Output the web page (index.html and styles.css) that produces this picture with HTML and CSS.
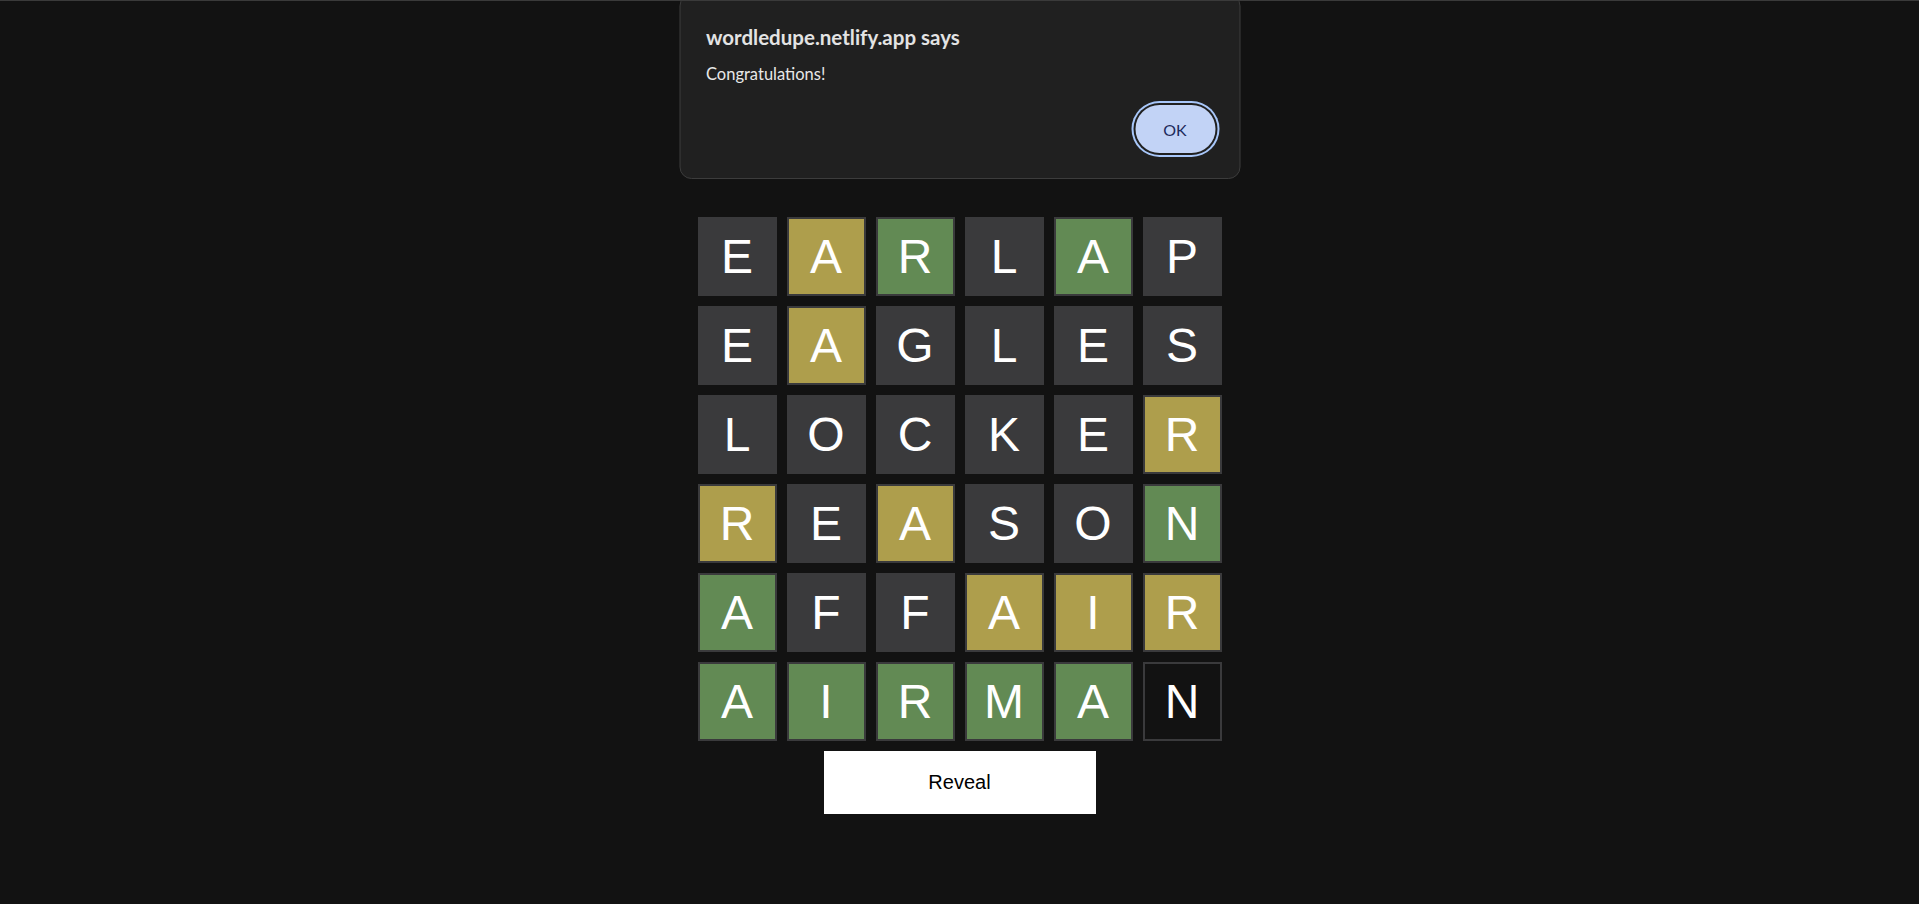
FILE: index.html
```html
<!DOCTYPE html>
<html lang="en">
<head>
<meta charset="utf-8">
<title>Wordle Dupe</title>
<link rel="stylesheet" href="styles.css">
</head>
<body>
<main class="game">
  <div class="board">
    <div class="tile absent">E</div><div class="tile present">A</div><div class="tile correct">R</div><div class="tile absent">L</div><div class="tile correct">A</div><div class="tile absent">P</div>
    <div class="tile absent">E</div><div class="tile present">A</div><div class="tile absent">G</div><div class="tile absent">L</div><div class="tile absent">E</div><div class="tile absent">S</div>
    <div class="tile absent">L</div><div class="tile absent">O</div><div class="tile absent">C</div><div class="tile absent">K</div><div class="tile absent">E</div><div class="tile present">R</div>
    <div class="tile present">R</div><div class="tile absent">E</div><div class="tile present">A</div><div class="tile absent">S</div><div class="tile absent">O</div><div class="tile correct">N</div>
    <div class="tile correct">A</div><div class="tile absent">F</div><div class="tile absent">F</div><div class="tile present">A</div><div class="tile present">I</div><div class="tile present">R</div>
    <div class="tile correct">A</div><div class="tile correct">I</div><div class="tile correct">R</div><div class="tile correct">M</div><div class="tile correct">A</div><div class="tile empty">N</div>
  </div>
  <button class="reveal">Reveal</button>
</main>
<div class="dialog" role="alertdialog">
  <div class="dialog-title">wordledupe.netlify.app says</div>
  <div class="dialog-message">Congratulations!</div>
  <div class="dialog-actions">
    <button class="dialog-ok">OK</button>
  </div>
</div>
</body>
</html>
```
FILE: styles.css
```css
html, body {
  margin: 0;
  padding: 0;
}
body {
  background: #121212;
  border-top: 1px solid #3a3a3a;
  height: 904px;
  box-sizing: border-box;
  overflow: hidden;
  position: relative;
  font-family: "Liberation Sans", Arial, sans-serif;
}
.game {
  display: flex;
  flex-direction: column;
  align-items: center;
  padding-top: 216px;
  gap: 10px;
}
.board {
  display: grid;
  grid-template-columns: repeat(6, 79px);
  grid-auto-rows: 79px;
  gap: 10px;
}
.tile {
  box-sizing: border-box;
  border: 2px solid #3a3a3c;
  display: flex;
  align-items: center;
  justify-content: center;
  color: #ffffff;
  font-size: 48px;
  font-family: "Liberation Sans", Arial, sans-serif;
}
.absent { background: #3a3a3c; }
.present { background: #ae9e4c; }
.correct { background: #628a54; }
.empty { background: #121212; }
.reveal {
  width: 272px;
  height: 63px;
  border: none;
  background: #ffffff;
  color: #000000;
  font-family: "Liberation Sans", Arial, sans-serif;
  font-size: 20px;
  padding: 0;
}
.dialog {
  position: absolute;
  top: -7px;
  left: 50%;
  transform: translateX(-50%);
  width: 561px;
  height: 185px;
  box-sizing: border-box;
  background: #202020;
  border: 1px solid #3c3c3c;
  border-radius: 12px;
  padding: 30px 24px 0 26px;
  font-family: Lato, "Open Sans", sans-serif;
  color: #e8e8e8;
  display: flex;
  flex-direction: column;
}
.dialog-title {
  font-size: 20.5px;
  font-weight: 700;
  line-height: 24px;
  color: #e3e3e3;
}
.dialog-message {
  margin-top: 15px;
  font-size: 16.5px;
  line-height: 20px;
}
.dialog-actions {
  display: flex;
  justify-content: flex-end;
  margin-top: 21px;
}
.dialog-ok {
  width: 80px;
  height: 48px;
  border: none;
  border-radius: 24px;
  background: #c2d3f6;
  color: #1d2a5c;
  font-family: Lato, "Open Sans", sans-serif;
  font-size: 16px;
  box-shadow: 0 0 0 2px #202020, 0 0 0 4px #a8c7fa;
  padding: 0;
}
```
